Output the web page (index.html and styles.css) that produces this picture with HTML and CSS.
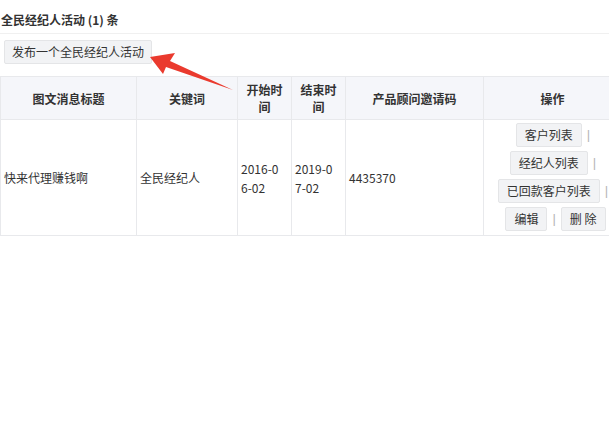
FILE: index.html
```html
<!DOCTYPE html>
<html lang="zh">
<head>
<meta charset="utf-8">
<title>全民经纪人活动</title>
<link rel="stylesheet" href="styles.css">
</head>
<body>
<div class="page">
  <div class="title">全民经纪人活动 (1) 条</div>
  <div class="toolbar">
    <button class="btn">发布一个全民经纪人活动</button>
  </div>
  <div class="table-wrap">
    <table class="grid">
      <colgroup>
        <col class="c1"><col class="c2"><col class="c3"><col class="c4"><col class="c5"><col class="c6">
      </colgroup>
      <thead>
        <tr>
          <th>图文消息标题</th>
          <th>关键词</th>
          <th>开始时间</th>
          <th>结束时间</th>
          <th>产品顾问邀请码</th>
          <th>操作</th>
        </tr>
      </thead>
      <tbody>
        <tr>
          <td>快来代理赚钱啊</td>
          <td>全民经纪人</td>
          <td class="date">2016-06-02</td>
          <td class="date">2019-07-02</td>
          <td>4435370</td>
          <td class="ops">
            <div class="op-line"><button class="btn sm">客户列表</button><span class="sep">|</span></div>
            <div class="op-line"><button class="btn sm">经纪人列表</button><span class="sep">|</span></div>
            <div class="op-line"><button class="btn sm">已回款客户列表</button><span class="sep">|</span></div>
            <div class="op-line"><button class="btn sm">编辑</button><span class="sep">|</span><button class="btn sm">删 除</button></div>
          </td>
        </tr>
      </tbody>
    </table>
  </div>
  <svg class="arrow" width="90" height="40" viewBox="148 52 90 40">
    <polygon points="150,57 175,53 170,61 233,90 166,67 163,74" fill="#ea3a2e"/>
  </svg>
</div>
</body>
</html>
```
FILE: styles.css
```css
html, body {
  margin: 0;
  padding: 0;
  background: #fff;
  overflow: hidden;
}
.page {
  position: relative;
  width: 609px;
  height: 436px;
  font-family: "Noto Sans CJK SC", "Microsoft YaHei", sans-serif;
  font-size: 12px;
  color: #333;
}
.title {
  height: 34px;
  line-height: 40px;
  padding-left: 1px;
  font-weight: bold;
  color: #333;
  border-bottom: 1px solid #f0f0f0;
  box-sizing: border-box;
}
.toolbar {
  padding: 6px 0 0 4px;
  height: 42px;
  box-sizing: border-box;
}
.btn {
  font-family: inherit;
  font-size: 12px;
  color: #333;
  background: #f2f3f5;
  border: 1px solid #e4e5e7;
  border-radius: 2px;
  height: 24px;
  padding: 0 7px;
  margin: 0;
  line-height: 22px;
  cursor: pointer;
}
.table-wrap {
  width: 609px;
  overflow: hidden;
}
.grid {
  width: 621px;
  table-layout: fixed;
  border-collapse: collapse;
}
.c1 { width: 136px; }
.c2 { width: 101px; }
.c3 { width: 54px; }
.c4 { width: 54px; }
.c5 { width: 138px; }
.c6 { width: 138px; }
.grid th {
  background: #f5f6fa;
  font-weight: bold;
  line-height: 17px;
  padding: 4px 8px;
  text-align: center;
  border: 1px solid #e8e9ec;
  height: 43px;
  box-sizing: border-box;
}
.grid td {
  padding: 0 4px 0 3px;
  line-height: 19px;
  border: 1px solid #e8e9ec;
  border-top: none;
  vertical-align: middle;
  word-break: break-all;
  height: 116px;
  box-sizing: border-box;
}
.grid td.date {
  padding-right: 9px;
}
.grid td.ops {
  text-align: center;
  padding: 1px 0 2px 6px;
}
.op-line {
  height: 28px;
  display: flex;
  justify-content: center;
  align-items: center;
}
.btn.sm {
  height: 24px;
  line-height: 22px;
  padding: 0 8px;
}
.sep {
  color: #b5b5b5;
  margin: 0 5px;
  font-family: "Liberation Sans", sans-serif;
  font-size: 13px;
  line-height: 14px;
}
.arrow {
  position: absolute;
  left: 148px;
  top: 52px;
}
```
